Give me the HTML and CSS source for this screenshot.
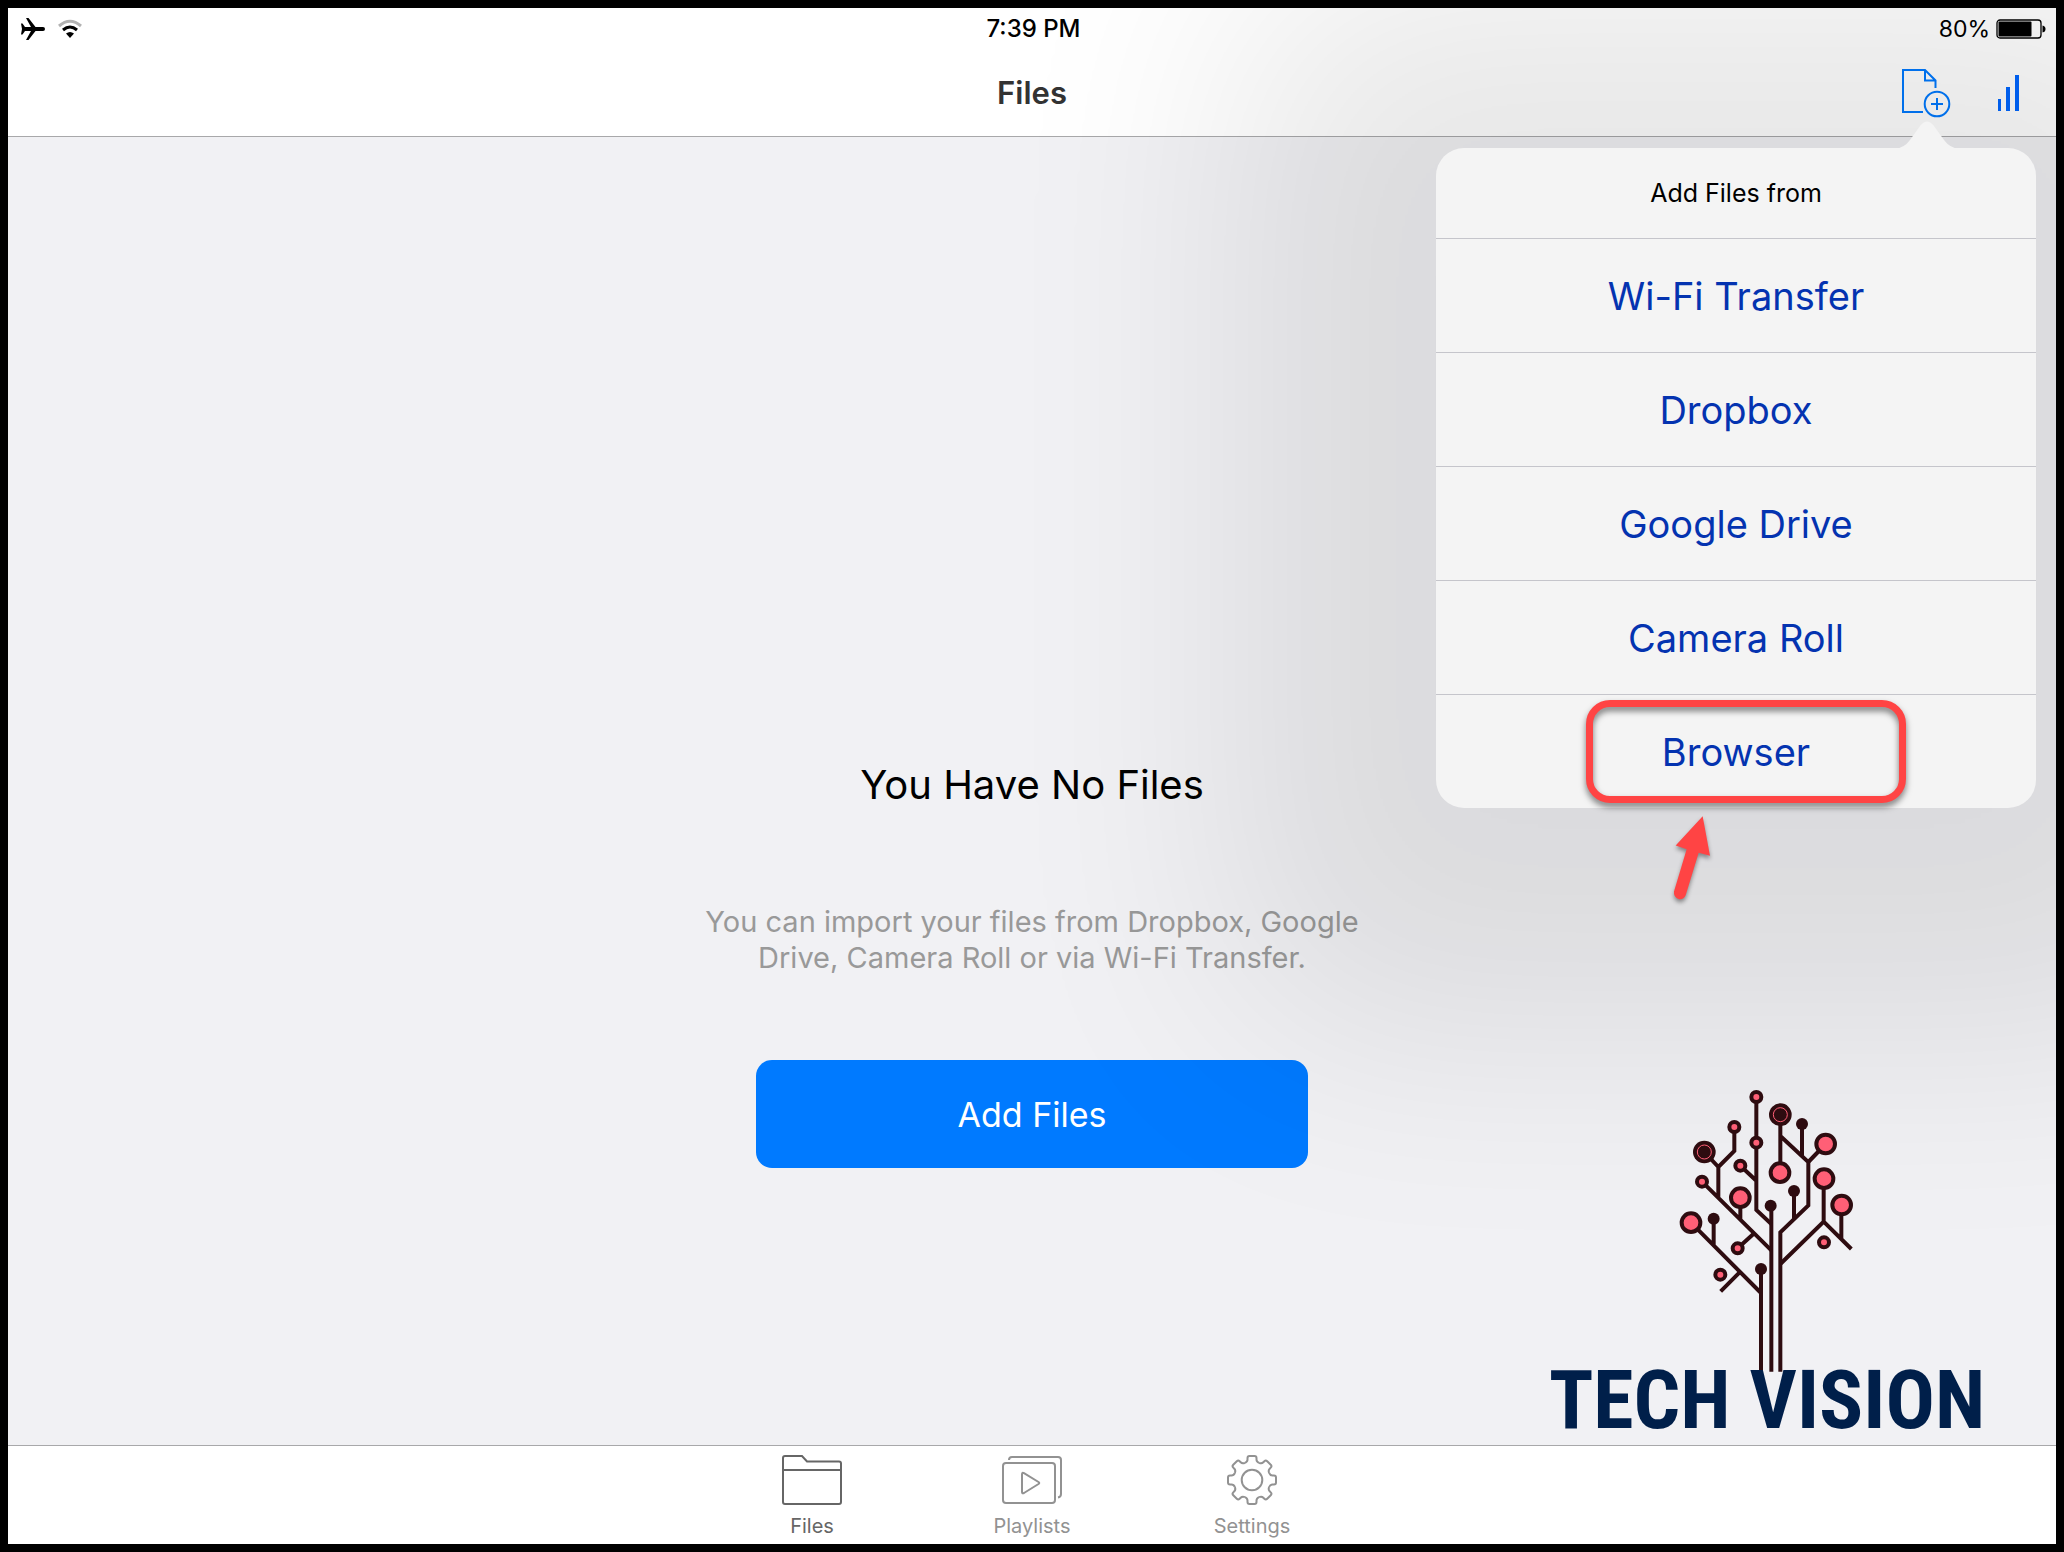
FILE: index.html
```html
<!DOCTYPE html>
<html lang="en">
<head>
    <meta charset="UTF-8">
    <meta name="viewport" content="width=device-width, initial-scale=1.0">
    <title>Files</title>
    <link rel="stylesheet" href="styles.css">
</head>
<body>
    <div class="screen">
        <header class="top">
            <div class="status-bar">
                <div class="status-left">
                    <svg width="24" height="22" viewBox="0 0 24 22">
                        <path d="M0 5.5H1.5L4 9H10L5 0H7.5L14.5 9H22Q24 9 24 11T22 13H14.5L7.5 22H5L10 13H4L1.5 16.5H0L1 11Z"/>
                    </svg>
                    <svg width="26" height="20" viewBox="0 0 26 20" fill="none">
                        <path d="M2 7Q13 -2.500 24 7" stroke="#b2b2b2" stroke-width="3"/>
                        <path d="M6 11Q13 5 20 11" stroke="#000" stroke-width="3"/>
                        <path d="M9 14.500Q13 11.500 17 14.500L13 19Z" fill="#000"/>
                    </svg>
                </div>
                <span class="clock">7:39 PM</span>
                <div class="status-right">
                    <span>80%</span>
                    <svg width="50" height="20" viewBox="0 0 50 20">
                        <rect x="1" y="1" width="44" height="18" rx="3" fill="#fff" stroke="#000" stroke-width="1.300"/>
                        <rect x="2.500" y="2.500" width="33" height="15" rx="1"/>
                        <path d="M46.500 6.500Q49.500 7 49.500 10T46.500 13.500Z"/>
                    </svg>
                </div>
            </div>
            <div class="nav-bar">
                <h1>Files</h1>
                <div class="nav-actions">
                    <button class="icon-btn" aria-label="Add files">
                        <svg width="52" height="52" viewBox="0 0 52 52" fill="none" stroke="#007aff" stroke-width="2">
                            <path d="M23 45H3V3H25L35.500 13.500V21M25 3V13.500H35.500"/>
                            <circle cx="37" cy="37" r="12.300"/>
                            <path d="M37 31V43M31 37H43"/>
                        </svg>
                    </button>
                    <button class="icon-btn" aria-label="Now playing">
                        <svg width="22" height="36" viewBox="0 0 22 36" fill="#0066ff">
                            <rect x="1" y="24" width="3" height="12"/>
                            <rect x="9" y="12" width="4" height="24"/>
                            <rect x="18" y="0" width="4" height="36"/>
                        </svg>
                    </button>
                </div>
            </div>
        </header>

        <main>
            <h2>You Have No Files</h2>
            <p class="hint">You can import your files from Dropbox, Google Drive, Camera Roll or via Wi-Fi Transfer.</p>
            <button class="add-btn">Add Files</button>
        </main>

        <nav class="tab-bar">
            <a class="tab active" href="#files">
                <svg width="60" height="52" viewBox="0 0 60 52">
                    <path d="M1 16V4Q1 2 3 2H20L25 7.500H57Q59 7.500 59 9.500V48Q59 50 57 50H3Q1 50 1 48V16H59"/>
                </svg>
                <span>Files</span>
            </a>
            <a class="tab" href="#playlists">
                <svg width="60" height="52" viewBox="0 0 60 52">
                    <rect x="1" y="9" width="52" height="40" rx="3"/>
                    <path d="M7 6Q7 3 10 3H56Q59 3 59 6V40Q59 43 56 43.500"/>
                    <path d="M20 20.500Q20 18 22 19.200L36.500 28Q38 29 36.500 30L22 39Q20 40 20 38Z"/>
                </svg>
                <span>Playlists</span>
            </a>
            <a class="tab" href="#settings">
                <svg width="60" height="52" viewBox="-30 -26 60 52">
                    <defs>
                        <path id="tooth" d="M-7.100 -17.100Q-4.500 -18.200 -4.500 -20.500V-22Q-4.500 -24 -2.500 -24H2.500Q4.500 -24 4.500 -22V-20.500Q4.500 -18.200 7.100 -17.100"/>
                    </defs>
                    <use href="#tooth"/>
                    <use href="#tooth" transform="rotate(45)"/>
                    <use href="#tooth" transform="rotate(90)"/>
                    <use href="#tooth" transform="rotate(135)"/>
                    <use href="#tooth" transform="rotate(180)"/>
                    <use href="#tooth" transform="rotate(225)"/>
                    <use href="#tooth" transform="rotate(270)"/>
                    <use href="#tooth" transform="rotate(315)"/>
                    <circle r="10.300"/>
                </svg>
                <span>Settings</span>
            </a>
        </nav>

        <div class="popover">
            <svg class="popover-arrow" width="76" height="28" viewBox="0 0 76 28">
                <path d="M6 28Q15 27 21 19L31 5Q38 -4 45 5L55 19Q61 27 70 28Z" fill="#f4f4f4"/>
            </svg>
            <h3>Add Files from</h3>
            <button>Wi-Fi Transfer</button>
            <button>Dropbox</button>
            <button>Google Drive</button>
            <button>Camera Roll</button>
            <button>Browser</button>
            <div class="ring"></div>
            <svg class="pointer" width="50" height="97" viewBox="330 390 150 290">
                <path d="M428 408L450 527L416 518L377 645Q371 659 357 657Q340 652 342 634L380 507L347 496Z" fill="#ff4444"/>
            </svg>
        </div>

        <!-- Tech Vision watermark -->
        <div class="brand">
            <svg width="180" height="286" viewBox="110 50 540 858">
                <g fill="none" stroke="#2e0c10" stroke-width="12">
                    <path d="M362 596V904M393 406V904M420 904V486L504 405V275L420 197M420 133V307"/>
                    <path d="M152 457L362 668M220 445V526M297 607L241 663"/>
                    <path d="M185 334L393 540M234 382V290L192 245M234 290L282 242V170M300 382V448M340 490L292 534"/>
                    <path d="M348 80V419L393 461M300 286L348 331"/>
                    <path d="M485 160V256M504 275L556 221M461 362V445"/>
                    <path d="M420 581L550 454V325M550 454L633 536M603 404V505"/>
                </g>
                <g fill="#2e0c10">
                    <circle cx="485" cy="161" r="18"/>
                    <circle cx="461" cy="362" r="18"/>
                    <circle cx="391" cy="406" r="18"/>
                    <circle cx="220" cy="445" r="18"/>
                    <circle cx="362" cy="596" r="18"/>
                    <circle cx="420" cy="133" r="34"/>
                    <circle cx="192" cy="245" r="34"/>
                </g>
                <g fill="none" stroke="#ff5f76" stroke-width="3">
                    <circle cx="420" cy="133" r="21"/>
                    <circle cx="192" cy="245" r="21"/>
                </g>
                <g fill="#ff5f76" stroke="#2e0c10" stroke-width="12">
                    <circle cx="556" cy="221" r="28"/>
                    <circle cx="419" cy="307" r="28"/>
                    <circle cx="551" cy="325" r="28"/>
                    <circle cx="604" cy="404" r="28"/>
                    <circle cx="300" cy="382" r="28"/>
                    <circle cx="152" cy="457" r="28"/>
                    <circle cx="348" cy="80" r="15"/>
                    <circle cx="282" cy="170" r="15"/>
                    <circle cx="348" cy="217" r="15"/>
                    <circle cx="300" cy="286" r="15"/>
                    <circle cx="185" cy="334" r="15"/>
                    <circle cx="551" cy="516" r="15"/>
                    <circle cx="292" cy="534" r="15"/>
                    <circle cx="240" cy="613" r="15"/>
                </g>
            </svg>
            <span class="brand-name">TECH VISION</span>
        </div>
    </div>
</body>
</html>
```
FILE: styles.css
```css
* {
    box-sizing: border-box;
}

body {
    margin: 0;
    font-family: Inter, "Liberation Sans", sans-serif;
}

h1, h2, h3, p {
    margin: 0;
    font-weight: 400;
}

button {
    font-family: inherit;
    border: none;
    background: none;
    padding: 0;
    cursor: pointer;
}

svg {
    display: block;
}

.screen {
    position: relative;
    display: flex;
    flex-direction: column;
    min-height: 100vh;
    border: 8px solid #000;
    background-color: #f1f1f4;
    overflow: hidden;
}

.top {
    background-color: #fff;
    border-bottom: 1px solid #a8a8aa;
}

.status-bar {
    display: grid;
    grid-template-columns: 1fr auto 1fr;
    align-items: center;
    height: 41px;
    padding: 0 10px 0 13px;
    font-size: 23px;
}

.status-left,
.status-right {
    display: flex;
    align-items: center;
    gap: 12px;
}

.status-right {
    justify-content: flex-end;
    gap: 6px;
}

.clock {
    font-size: 24px;
    font-weight: 500;
}

.nav-bar {
    display: grid;
    grid-template-columns: 1fr auto 1fr;
    align-items: center;
    height: 87px;
    padding: 0 37px;
}

.nav-bar h1 {
    grid-column: 2;
    font-size: 31px;
    font-weight: 600;
    color: #333;
}

.nav-actions {
    display: flex;
    justify-content: flex-end;
    align-items: center;
    gap: 45px;
}

main {
    flex: 1;
    display: flex;
    flex-direction: column;
    align-items: center;
    padding-top: 624px;
}

main h2 {
    font-size: 40px;
    line-height: 48px;
}

.hint {
    max-width: 670px;
    margin: 95px 0 84px;
    font-size: 29px;
    line-height: 36px;
    text-align: center;
    color: #999;
}

.add-btn {
    width: 552px;
    height: 108px;
    border-radius: 16px;
    background-color: #007aff;
    color: #fff;
    font-size: 34px;
}

.tab-bar {
    display: flex;
    justify-content: center;
    height: 99px;
    padding-top: 8px;
    background-color: #fff;
    border-top: 1px solid #a8a8aa;
}

.tab {
    display: flex;
    flex-direction: column;
    align-items: center;
    gap: 8px;
    width: 220px;
    font-size: 20px;
    line-height: 24px;
    text-decoration: none;
    color: #929292;
}

.tab svg {
    fill: none;
    stroke: currentColor;
    stroke-width: 2;
}

.tab.active {
    color: #666;
}

.popover {
    position: absolute;
    top: 140px;
    right: 20px;
    width: 600px;
    border-radius: 28px;
    background-color: #f4f4f4;
    box-shadow: 0 20px 240px 200px rgba(0, 0, 0, 0.095);
}

.popover-arrow {
    position: absolute;
    top: -27px;
    right: 71px;
}

.popover h3 {
    font-size: 25px;
    line-height: 90px;
    text-align: center;
}

.popover button {
    display: block;
    width: 100%;
    height: 114px;
    border-top: 1px solid #c5c5cb;
    font-size: 38px;
    color: #0433b0;
}

.ring {
    position: absolute;
    right: 130px;
    bottom: 5px;
    width: 320px;
    height: 103px;
    border: 7px solid #ff4444;
    border-radius: 24px;
    filter: drop-shadow(0 4px 3px rgba(0, 0, 0, 0.5));
    pointer-events: none;
}

.pointer {
    position: absolute;
    left: 234px;
    top: 662px;
    filter: drop-shadow(0 3px 2px rgba(0, 0, 0, 0.4));
}

.brand {
    position: absolute;
    right: 72px;
    bottom: 102px;
    display: flex;
    flex-direction: column;
    align-items: center;
    width: 434px;
}

.brand-name {
    position: relative;
    margin-top: -15px;
    font-family: "Roboto Condensed", "Liberation Sans Narrow", "Open Sans Condensed", "DejaVu Sans Condensed", sans-serif;
    font-size: 82px;
    font-weight: 700;
    line-height: 84px;
    white-space: nowrap;
    color: #001f4a;
}
```
